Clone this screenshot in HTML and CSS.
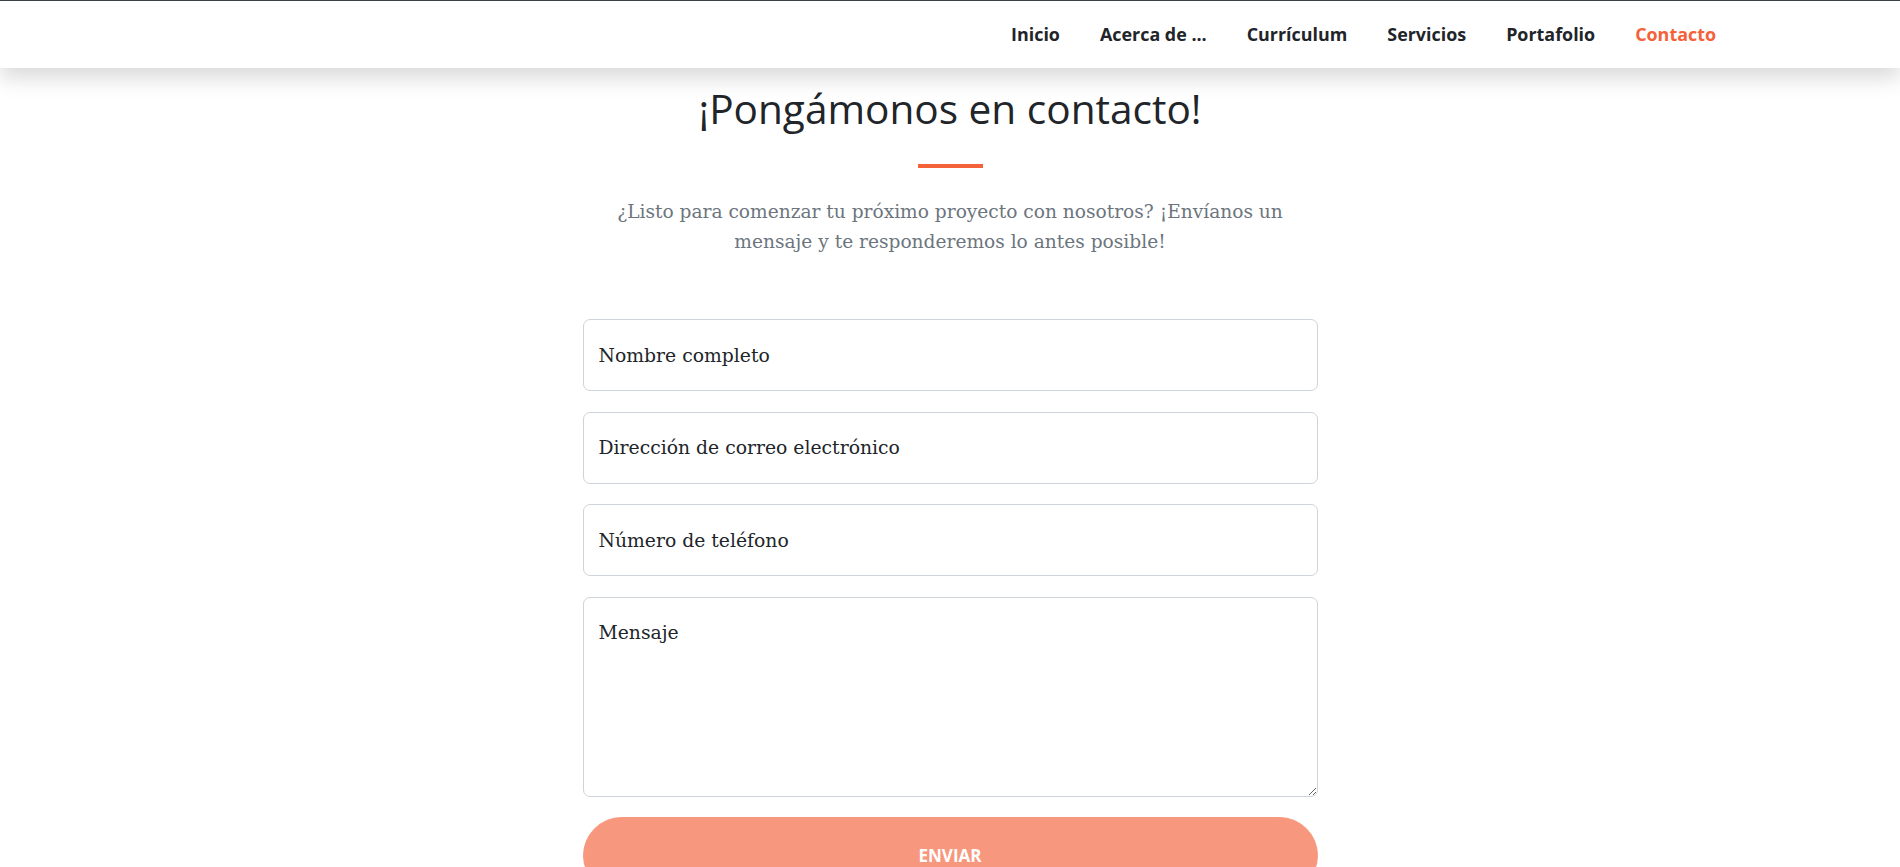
FILE: index.html
```html
<!DOCTYPE html>
<html lang="es">
<head>
<meta charset="utf-8">
<title>Contacto</title>
<link rel="stylesheet" href="styles.css">
</head>
<body>
<nav class="navbar">
  <ul class="nav-list">
    <li><a class="nav-link" href="#">Inicio</a></li>
    <li><a class="nav-link" href="#">Acerca de ...</a></li>
    <li><a class="nav-link" href="#">Currículum</a></li>
    <li><a class="nav-link" href="#">Servicios</a></li>
    <li><a class="nav-link" href="#">Portafolio</a></li>
    <li><a class="nav-link active" href="#">Contacto</a></li>
  </ul>
</nav>
<main class="section">
  <h2 class="title">¡Pongámonos en contacto!</h2>
  <hr class="divider">
  <p class="lead">¿Listo para comenzar tu próximo proyecto con nosotros? ¡Envíanos un mensaje y te responderemos lo antes posible!</p>
  <form class="form">
    <input class="field" type="text" placeholder="Nombre completo">
    <input class="field" type="email" placeholder="Dirección de correo electrónico">
    <input class="field" type="tel" placeholder="Número de teléfono">
    <textarea class="field area" placeholder="Mensaje"></textarea>
    <button class="btn" type="button" disabled>Enviar</button>
  </form>
</main>
</body>
</html>
```
FILE: styles.css
```css
html {
  scrollbar-width: none;
}
body {
  margin: 0;
  background: #fff;
  color: #212529;
  font-family: "DejaVu Serif", serif;
}
.navbar {
  position: relative;
  z-index: 2;
  height: 67px;
  border-top: 1px solid #3b4045;
  background: #fff;
  box-shadow: 0 10px 20px rgba(0, 0, 0, 0.15);
  display: flex;
  justify-content: flex-end;
  align-items: center;
  padding-right: 164px;
}
.nav-list {
  list-style: none;
  margin: 0;
  padding: 0 0 2px;
  display: flex;
}
.nav-link {
  display: block;
  padding: 0 20px;
  font-family: "Open Sans", sans-serif;
  font-weight: 700;
  font-size: 17.9px;
  color: #212529;
  text-decoration: none;
}
.nav-link.active {
  color: #f4623a;
}
.section {
  display: flex;
  flex-direction: column;
  align-items: center;
  padding-top: 17px;
}
.title {
  margin: 0;
  font-family: "Open Sans", sans-serif;
  font-weight: 500;
  font-size: 40.6px;
  line-height: 48px;
  color: #212529;
  text-align: center;
}
.divider {
  width: 65px;
  height: 4px;
  margin: 31px 0 29px;
  border: 0;
  background: #f4623a;
}
.lead {
  width: 735px;
  margin: 0 0 62px;
  font-size: 18.6px;
  line-height: 30px;
  color: #6c757d;
  text-align: center;
}
.form {
  width: 735px;
  display: flex;
  flex-direction: column;
  gap: 20.6px;
}
.field {
  box-sizing: border-box;
  width: 100%;
  height: 72px;
  padding: 0 15px;
  border: 1px solid #ced4da;
  border-radius: 7px;
  font-family: "DejaVu Serif", serif;
  font-size: 18.8px;
  color: #212529;
  background: #fff;
  outline: none;
}
.field::placeholder {
  color: #212529;
  opacity: 1;
}
.area {
  height: 200px;
  padding: 20px 15px;
  line-height: 30px;
  resize: vertical;
}
.btn {
  padding: 25px 45px;
  border: 1px solid #f4623a;
  border-radius: 50rem;
  background: #f4623a;
  opacity: 0.65;
  color: #fff;
  font-family: "Open Sans", sans-serif;
  font-weight: 700;
  font-size: 17px;
  line-height: 25px;
  text-transform: uppercase;
}
```
